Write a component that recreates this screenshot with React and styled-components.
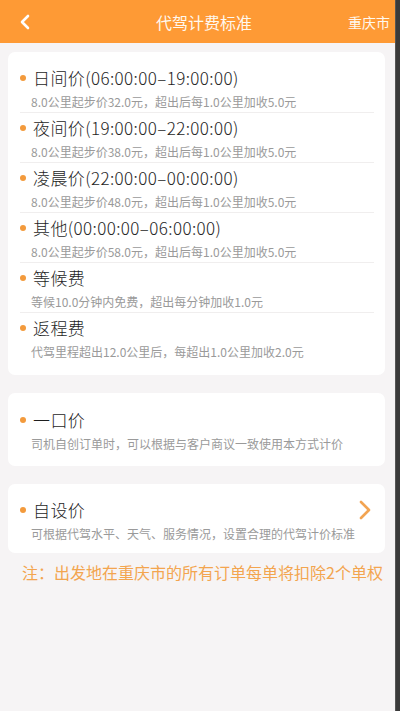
import React from "react";
import styled, { createGlobalStyle } from "styled-components";

const GlobalStyle = createGlobalStyle`
  body {
    margin: 0;
    font-family: "Noto Sans CJK SC", "Noto Sans", sans-serif;
    background: #f6f4f5;
  }
`;

const rules = [
  { title: "日间价(06:00:00–19:00:00)", desc: "8.0公里起步价32.0元，超出后每1.0公里加收5.0元" },
  { title: "夜间价(19:00:00–22:00:00)", desc: "8.0公里起步价38.0元，超出后每1.0公里加收5.0元" },
  { title: "凌晨价(22:00:00–00:00:00)", desc: "8.0公里起步价48.0元，超出后每1.0公里加收5.0元" },
  { title: "其他(00:00:00–06:00:00)", desc: "8.0公里起步价58.0元，超出后每1.0公里加收5.0元" },
  { title: "等候费", desc: "等候10.0分钟内免费，超出每分钟加收1.0元" },
  { title: "返程费", desc: "代驾里程超出12.0公里后，每超出1.0公里加收2.0元" },
];

const App = () => {
  return (
    <>
      <GlobalStyle />
      <Screen>
        <Page>
          <Header>
            <Back>
              <svg width="14" height="16" viewBox="0 0 14 16">
                <path d="M10 2 L4 8 L10 14" fill="none" stroke="#fff" strokeWidth="2.6" strokeLinecap="round" strokeLinejoin="round" />
              </svg>
            </Back>
            <Title>代驾计费标准</Title>
            <City>重庆市</City>
          </Header>
          <Content>
            <Card $top={11} $bottom={13}>
              {rules.map((r, i) => (
                <Row key={r.title} $last={i === rules.length - 1}>
                  <RowTitle>
                    <Dot />
                    {r.title}
                  </RowTitle>
                  <Desc>{r.desc}</Desc>
                </Row>
              ))}
            </Card>
            <Card $top={12} $bottom={12}>
              <Row $last>
                <RowTitle>
                  <Dot />
                  一口价
                </RowTitle>
                <Desc>司机自创订单时，可以根据与客户商议一致使用本方式计价</Desc>
              </Row>
            </Card>
            <Card $top={11} $bottom={9}>
              <Row $last>
                <RowTitle>
                  <Dot />
                  自设价
                  <Arrow>
                    <svg width="12" height="20" viewBox="0 0 12 20">
                      <path d="M2 2 L10 10 L2 18" fill="none" stroke="#f2a452" strokeWidth="2.6" strokeLinecap="round" strokeLinejoin="round" />
                    </svg>
                  </Arrow>
                </RowTitle>
                <Desc>可根据代驾水平、天气、服务情况，设置合理的代驾计价标准</Desc>
              </Row>
            </Card>
            <Note>注：出发地在重庆市的所有订单每单将扣除2个单权</Note>
          </Content>
        </Page>
        <Edge />
      </Screen>
    </>
  );
};

const Screen = styled.div`
  display: flex;
  height: 711px;
  overflow: hidden;
`;

const Page = styled.div`
  flex: 1;
  display: flex;
  flex-direction: column;
  background: #f6f4f5;
`;

const Edge = styled.div`
  width: 4px;
  background: #3a3a3a;
  border-left: 1px solid #555;
`;

const Header = styled.div`
  height: 43px;
  background: #fe9a35;
  display: flex;
  align-items: center;
  padding: 0 5px 0 18px;
  color: #fff8ee;
`;

const Back = styled.div`
  width: 40px;
  display: flex;
  align-items: center;
`;

const Title = styled.div`
  flex: 1;
  text-align: center;
  font-size: 16px;
  padding-left: 16px;
`;

const City = styled.div`
  font-size: 14px;
  width: 56px;
  text-align: right;
`;

const Content = styled.div`
  padding: 9px 10px 0 8px;
  display: flex;
  flex-direction: column;
  gap: 18px;
`;

const Card = styled.div`
  background: #fff;
  border-radius: 7px;
  padding: ${(p) => p.$top}px 11px ${(p) => p.$bottom}px 12px;
`;

const Row = styled.div`
  padding: 4px 0 1px;
  border-bottom: ${(p) => (p.$last ? "none" : "1px solid #f0eeee")};
`;

const RowTitle = styled.div`
  display: flex;
  align-items: center;
  gap: 7px;
  font-size: 17px;
  font-weight: 300;
  letter-spacing: 0.4px;
  line-height: 22px;
  color: #1e1e1e;
`;

const Dot = styled.span`
  width: 6px;
  height: 6px;
  border-radius: 50%;
  background: #f39a3c;
  flex-shrink: 0;
`;

const Arrow = styled.span`
  margin-left: auto;
  margin-right: 3px;
  display: flex;
  align-items: center;
`;

const Desc = styled.div`
  margin-top: 4px;
  padding-left: 11px;
  font-size: 12px;
  line-height: 18px;
  color: #9a9a9a;
`;

const Note = styled.div`
  margin-top: -10px;
  padding-left: 14px;
  font-size: 16px;
  line-height: 22px;
  color: #f3a54f;
`;

export default App;
